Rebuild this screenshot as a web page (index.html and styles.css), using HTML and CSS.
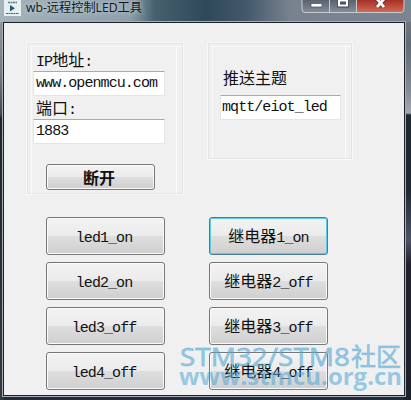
FILE: index.html
```html
<!DOCTYPE html>
<html lang="zh-CN">
<head>
<meta charset="utf-8">
<title>wb-远程控制LED工具</title>
<link rel="stylesheet" href="styles.css">
</head>
<body>
<div class="window">
  <header class="titlebar">
    <svg class="app-icon" width="17" height="16" viewBox="0 0 17 16"><rect width="17" height="16" fill="#e6f0f2"/><path d="M4 2.500h9" stroke="#647981" stroke-width="1.500" stroke-dasharray="2 .5"/><path d="M6 5l5 3.300-5 3.300z" fill="#245d72"/><path d="M2 13.500h13" stroke="#4a626b" stroke-dasharray="2 .5"/></svg>
    <h1 class="title">wb-远程控制LED工具</h1>
    <div class="controls">
      <svg width="104" height="14" viewBox="0 0 104 14">
        <defs>
          <linearGradient id="gray" x2="0" y2="1"><stop stop-color="#59626e"/><stop offset="1" stop-color="#858b99"/></linearGradient>
          <linearGradient id="red" x2="0" y2="1"><stop stop-color="#a73024"/><stop offset="1" stop-color="#cf6a57"/></linearGradient>
        </defs>
        <path d="M1 0v9q0 3 3 3h96q3 0 3-3V0z" fill="url(#gray)"/>
        <path d="M56 0v12h44q3 0 3-3V0z" fill="url(#red)"/>
        <path d="M1 0v9q0 3.500 3 3.500h96q3 0 3-3.500V0M28.500 0v12M55.500 0v12" fill="none" stroke="#c6cbd4"/>
        <path d="M10 3.500h11v3.500H10z" fill="#fff" stroke="#414b59" stroke-width=".7"/>
        <path d="M38 0v5.500h8V0M38 .5h8" fill="none" stroke="#39434e" stroke-width="4"/>
        <path d="M38 0v5.500h8V0M38 .5h8" fill="none" stroke="#fff" stroke-width="2.200"/>
        <path d="M76-1l7 8M83-1l-7 8" stroke="#692b2b" stroke-width="4.500"/>
        <path d="M76-1l7 8M83-1l-7 8" stroke="#fff" stroke-width="2.800"/>
      </svg>
    </div>
  </header>
  <main class="client">
    <section class="panels">
      <div class="group server">
        <div class="label"><span class="mono">IP</span>地址<span class="mono">:</span></div>
        <div class="field mono">www.openmcu.com</div>
        <div class="label second">端口<span class="mono">:</span></div>
        <div class="field mono">1883</div>
        <button class="btn connect">断开</button>
      </div>
      <div class="group topic">
        <div class="label">推送主题</div>
        <div class="field mono">mqtt/eiot_led</div>
      </div>
    </section>
    <section class="buttons">
      <button class="btn"><span class="mono">led1_on</span></button>
      <button class="btn focused">继电器<span class="mono">1_on</span></button>
      <button class="btn"><span class="mono">led2_on</span></button>
      <button class="btn">继电器<span class="mono">2_off</span></button>
      <button class="btn"><span class="mono">led3_off</span></button>
      <button class="btn">继电器<span class="mono">3_off</span></button>
      <button class="btn"><span class="mono">led4_off</span></button>
      <button class="btn">继电器<span class="mono">4_off</span></button>
    </section>
  </main>
  <svg class="watermark" width="231" height="60" viewBox="0 0 231 60">
    <text class="mark-name" x="9" y="26" textLength="170" lengthAdjust="spacingAndGlyphs">STM32/STM8</text>
    <text class="mark-name mark-cjk" x="180" y="26" textLength="50" lengthAdjust="spacingAndGlyphs">社区</text>
    <text class="mark-url" x="8" y="45" textLength="223" lengthAdjust="spacingAndGlyphs">www.stmcu.org.cn</text>
  </svg>
</div>
</body>
</html>
```
FILE: styles.css
```css
* { box-sizing: border-box; }
body { margin: 0; overflow: hidden; }
.window {
  position: relative;
  width: 411px;
  height: 400px;
  display: flex;
  flex-direction: column;
  padding: 0 6px 4px 3px;
  background:
    linear-gradient(90deg, #a6b3bb 0, #8c9fab 130px, #47606d 155px, #30495a 205px, #41586a 245px, #78828f 290px, #7d8491 411px) 0 0 / 100% 22px no-repeat,
    linear-gradient(#7d8491 0, #626a75 45px, #858b94 90px, #a5a8ae 113px, #20272f 115px, #222831 190px, #4d5268 240px, #20202a 265px, #1b222c 400px) right / 7px 100% no-repeat,
    linear-gradient(#94a1a9 0, #74797e 75px, #41474d 115px, #1e242a 118px, #333a41 400px) left / 4px 100% no-repeat,
    #232c3d;
  font-family: "Liberation Sans", "Noto Sans CJK SC", sans-serif;
}
.titlebar { display: flex; height: 22px; flex: none; }
.app-icon { flex: none; margin-left: 1px; }
.title {
  margin: 0 0 0 5px;
  font: 12.2px/16px "Open Sans", "Noto Sans CJK SC", sans-serif;
  white-space: nowrap;
  color: #10171c;
  text-shadow: 0 0 5px #dce5e9;
}
.controls { margin-left: auto; height: 14px; }
.controls svg { display: block; }
.client {
  flex: 1;
  padding: 20px 0 0 23px;
  background: #f0f0f0;
  border: 1px solid #1c2128;
  outline: 1px solid #a7acb4;
}
.panels { display: flex; align-items: flex-start; gap: 25px; height: 174px; }
.group {
  border: 1px solid #e4e4e4;
  outline: 1px solid #f8f8f8;
  box-shadow: inset 3px 2px 0 #f0f0f0, inset 4px 3px 0 #fafafa, inset -5px 0 0 #f0f0f0, inset -6px 0 0 #fafafa;
}
.server { width: 156px; height: 151px; padding: 5px 0 0 5px; }
.topic { width: 144px; height: 116px; padding: 23px 0 0 11px; }
.label {
  height: 22px;
  padding-left: 3px;
  font: 16px/20px "Noto Sans CJK SC", sans-serif;
  color: #111;
  white-space: nowrap;
}
.mono {
  font-family: "Liberation Mono", monospace;
  font-size: 15px;
  letter-spacing: -.93px;
  color: #111;
}
.field {
  width: 132px;
  height: 25px;
  padding-left: 2px;
  line-height: 24px;
  background: #fff;
  border: 1px solid #e5e5e5;
  border-top-color: #aaa;
  white-space: nowrap;
}
.second { height: 23px; line-height: 22px; }
.topic .field { width: 121px; margin-top: 6px; padding-left: 1px; }
.btn {
  height: 38px;
  padding: 0 3px 0 0;
  border: 1px solid #777;
  border-radius: 3px;
  background: linear-gradient(#f3f3f3, #ebebeb 49%, #dedede 51%, #cfcfcf);
  box-shadow: inset 0 0 0 1px #fafafa;
  font: 16px/34px "Noto Sans CJK SC", sans-serif;
  color: #111;
  white-space: nowrap;
}
.connect {
  display: block;
  width: 109px;
  height: 26px;
  margin: 20px 0 0 13px;
  line-height: 20px;
  font-weight: 700;
}
.buttons {
  display: grid;
  grid-template-columns: 119px 119px;
  grid-auto-rows: 38px;
  gap: 7px 44px;
  padding-left: 19px;
}
.buttons .btn { padding-bottom: 2px; }
.buttons .btn:nth-child(even) { padding-right: 0; }
.focused {
  border-color: #467f96;
  box-shadow: inset 0 0 0 1px #5ecbe4;
}
.watermark {
  position: absolute;
  left: 171px;
  top: 340px;
  pointer-events: none;
}
.watermark text { fill: #54a9d6; fill-opacity: .58; }
.mark-name {
  font: 400 25px "Noto Sans", sans-serif;
  stroke: #54a9d6;
  stroke-opacity: .45;
  stroke-width: .8px;
}
.mark-cjk { font-family: "Noto Sans CJK SC", sans-serif; }
.mark-url { font: 700 23px "Open Sans", sans-serif; }
```
